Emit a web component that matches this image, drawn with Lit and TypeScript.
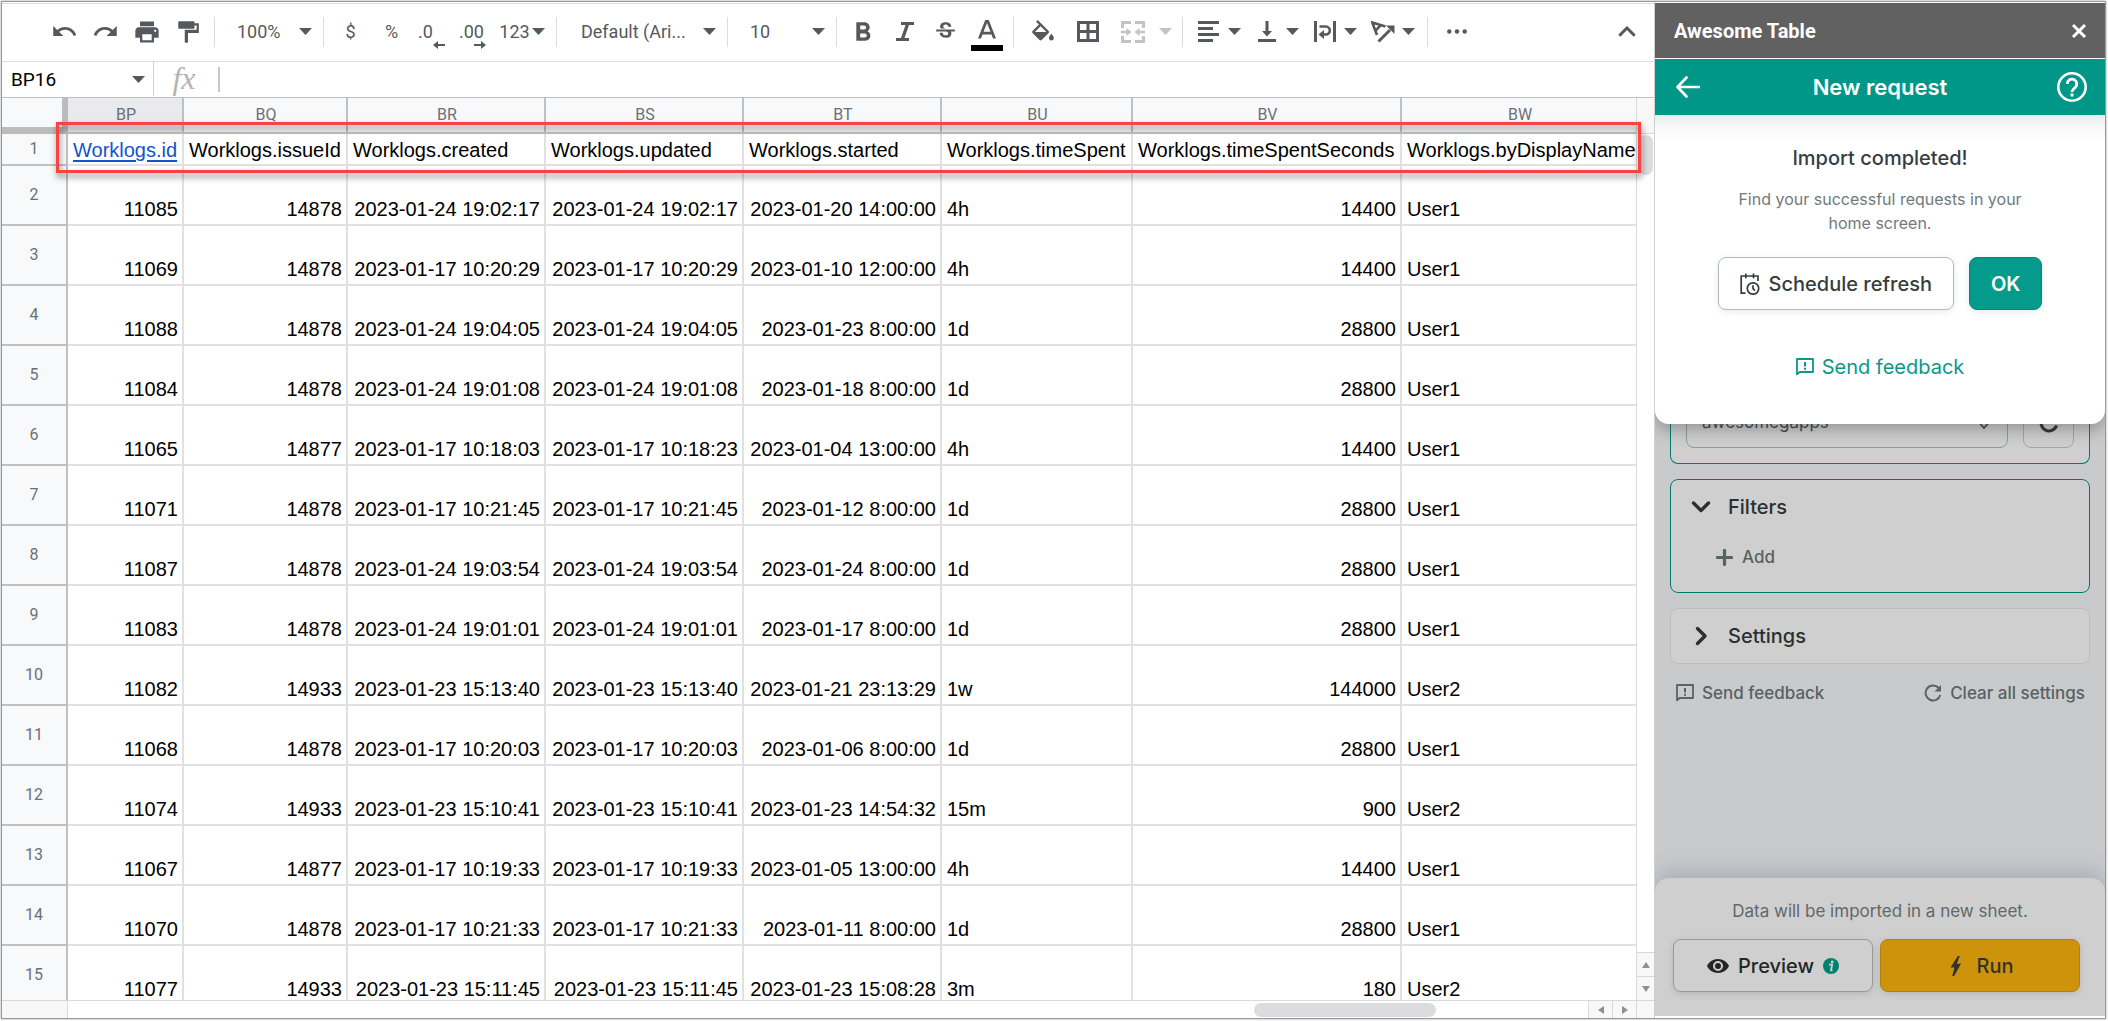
import { LitElement, html, css, svg, nothing, type TemplateResult } from "lit";
import { customElement, property } from "lit/decorators.js";
import { classMap } from "lit/directives/class-map.js";

type Glyph = { box: string; w: number; h: number; art: TemplateResult };

const glyphs: Record<string, Glyph> = {
  caret: { box: "0 0 13 7", w: 13, h: 7, art: svg`<path d="M0 0h13l-6.500 7z"/>` },
  undo: { box: "0 0 24 24", w: 29, h: 27, art: svg`<path d="M12.500 8c-2.650 0-5.050.990-6.900 2.600L2 7v9h9l-3.620-3.620c1.390-1.160 3.160-1.880 5.120-1.880 3.540 0 6.550 2.310 7.600 5.500l2.370-.780C21.080 11.030 17.150 8 12.500 8z"/>` },
  redo: { box: "0 0 24 24", w: 29, h: 27, art: svg`<path d="M18.400 10.600C16.550 8.990 14.150 8 11.500 8c-4.650 0-8.580 3.030-9.960 7.220L3.900 16c1.050-3.190 4.050-5.500 7.600-5.500 1.950 0 3.730.720 5.120 1.880L13 16h9V7l-3.600 3.600z"/>` },
  print: { box: "0 0 24 24", w: 28, h: 28, art: svg`<path d="M19 8H5c-1.660 0-3 1.340-3 3v6h4v4h12v-4h4v-6c0-1.660-1.340-3-3-3zm-3 11H8v-5h8v5zm3-7c-.550 0-1-.450-1-1s.450-1 1-1 1 .450 1 1-.450 1-1 1zm-1-9H6v4h12V3z"/>` },
  paint: { box: "0 0 24 24", w: 26, h: 26, art: svg`<path d="M18 4V3c0-.550-.450-1-1-1H4c-.550 0-1 .450-1 1v5c0 .550.450 1 1 1h13c.550 0 1-.450 1-1V6h2v4H9v11c0 .550.450 1 1 1h1c.550 0 1-.450 1-1v-8h10V4h-4z"/>` },
  decLeft: { box: "0 0 12 8", w: 12, h: 8, art: svg`<path d="M0 4l5-4v3h7v2H5v3z"/>` },
  decRight: { box: "0 0 12 8", w: 12, h: 8, art: svg`<path d="M12 4L7 0v3H0v2h7v3z"/>` },
  bold: { box: "6 3 13 16", w: 17, h: 21, art: svg`<path d="M15.600 10.790c.970-.670 1.650-1.770 1.650-2.790 0-2.260-1.750-4-4-4H7v14h7.040c2.090 0 3.710-1.700 3.710-3.790 0-1.520-.860-2.820-2.150-3.420zM10 6.500h3c.830 0 1.500.670 1.500 1.500s-.670 1.500-1.500 1.500h-3v-3zm3.500 9H10v-3h3.500c.830 0 1.500.670 1.500 1.500s-.670 1.500-1.500 1.500z"/>` },
  italic: { box: "0 0 18 19", w: 18, h: 19, art: svg`<path d="M5 0h13v3h-5L8.500 16H13v3H0v-3h5L9.500 3H5z"/>` },
  strike: { box: "0 0 24 24", w: 27, h: 25, art: svg`<path d="M7.240 8.750c-.260-.480-.390-1.030-.390-1.670 0-.610.130-1.160.400-1.670.260-.500.630-.930 1.110-1.290.480-.350 1.050-.630 1.700-.830.660-.190 1.390-.290 2.180-.290.810 0 1.540.110 2.210.340.660.220 1.230.540 1.690.940.470.400.830.880 1.080 1.430.250.550.380 1.150.380 1.810h-3.010c0-.310-.050-.590-.150-.850-.090-.270-.240-.490-.440-.680-.200-.190-.450-.330-.750-.440-.300-.100-.660-.160-1.060-.160-.390 0-.740.040-1.030.130-.290.090-.530.210-.720.360-.190.160-.340.340-.440.550-.100.210-.150.430-.150.660 0 .480.250.880.740 1.210.380.250.770.480 1.410.700H7.390c-.050-.080-.110-.170-.150-.250zM21 12v-2H3v2h9.620c.180.070.400.140.550.200.370.170.660.340.870.510.210.170.350.360.430.570.070.200.110.430.110.690 0 .230-.050.450-.140.660-.090.200-.230.380-.420.530-.190.150-.420.260-.710.350-.290.080-.630.130-1.010.130-.430 0-.830-.040-1.180-.130s-.660-.230-.910-.420c-.250-.190-.450-.440-.590-.750-.140-.310-.250-.760-.250-1.210H6.400c0 .550.080 1.130.240 1.580.160.450.370.850.650 1.210.280.350.600.660.980.920.370.260.780.480 1.220.650.440.170.900.300 1.380.390.480.080.960.130 1.440.130.800 0 1.530-.090 2.180-.280s1.210-.450 1.670-.790c.460-.340.820-.770 1.070-1.270s.380-1.070.380-1.710c0-.600-.100-1.140-.310-1.610-.050-.110-.110-.230-.170-.330H21z"/>` },
  textColor: { box: "0 0 32 38", w: 32, h: 38, art: svg`<path d="M14.200 7L7 25.500h3l1.500-4h9l1.500 4h3L17.800 7zM12.600 18.800L16 10.100l3.400 8.700z"/><path fill="#000" d="M0 32h32v6H0z"/>` },
  fill: { box: "2 0 20 20", w: 24, h: 24, art: svg`<path d="M16.560 8.940L7.620 0 6.210 1.410l2.380 2.380-5.150 5.150c-.590.590-.590 1.540 0 2.120l5.500 5.500c.290.290.680.440 1.060.440s.770-.150 1.060-.440l5.500-5.500c.590-.580.590-1.530 0-2.120zM5.210 10L10 5.210 14.790 10H5.210zM19 11.500s-2 2.170-2 3.500c0 1.100.900 2 2 2s2-.900 2-2c0-1.330-2-3.500-2-3.500z"/>` },
  borders: { box: "0 0 22 22", w: 22, h: 22, art: svg`<path d="M0 0v21h22V0zm9.500 18H3v-6h6.500zm0-9H3V3h6.500zm9.500 9h-6.500v-6H19zm0-9h-6.500V3H19z"/>` },
  merge: { box: "0 0 24 22", w: 24, h: 22, art: svg`<path d="M0 0h10v3H3v4H0zM14 0h10v7h-3V3h-7zM0 15h3v4h7v3H0zM21 15h3v7H14v-3h7zM0 9.800h5.500V7l5 4-5 4v-2.800H0zM24 9.800h-5.500V7l-5 4 5 4v-2.800H24z"/>` },
  alignLeft: { box: "0 0 21 21", w: 21, h: 21, art: svg`<path d="M0 0h21v3H0zM0 6h15v3H0zM0 12h21v3H0zM0 18h15v3H0z"/>` },
  alignBottom: { box: "0 0 18 21", w: 18, h: 21, art: svg`<path d="M7.500 0h3v10H14l-5 5.500L4 10h3.500zM0 18h18v3H0z"/>` },
  wrap: { box: "0 0 22 21", w: 22, h: 21, art: svg`<path d="M0 0h3v21H0zM19 0h3v21h-3z"/><path d="M5.500 5.500h6.300a4 4 0 0 1 0 8H9" fill="none" stroke="currentColor" stroke-width="2.600"/><path d="M4.500 13.500L10 9v9z"/>` },
  rotate: { box: "0 0 24 22", w: 24, h: 22, art: svg`<path d="M6 14L1.300 1.500 14.500 5.500M9.800 4.200L4.600 9.700" fill="none" stroke="currentColor" stroke-width="2.600"/><path d="M7.500 20.500L19 9" fill="none" stroke="currentColor" stroke-width="3"/><path d="M15 4.500h8.500V13z"/>` },
  more: { box: "0 0 20 5", w: 20, h: 5, art: svg`<circle cx="2.300" cy="2.500" r="2.200"/><circle cx="10" cy="2.500" r="2.200"/><circle cx="17.700" cy="2.500" r="2.200"/>` },
  collapse: { box: "0 0 18 11", w: 18, h: 11, art: svg`<path d="M1.300 9.700L9 2l7.700 7.700" fill="none" stroke="currentColor" stroke-width="3"/>` },
  up: { box: "0 0 8 6", w: 8, h: 6, art: svg`<path d="M0 6l4-6 4 6z"/>` },
  down: { box: "0 0 8 6", w: 8, h: 6, art: svg`<path d="M0 0l4 6 4-6z"/>` },
  left: { box: "0 0 6 8", w: 6, h: 8, art: svg`<path d="M6 0L0 4l6 4z"/>` },
  right: { box: "0 0 6 8", w: 6, h: 8, art: svg`<path d="M0 0l6 4-6 4z"/>` },
  close: { box: "0 0 16 16", w: 16, h: 16, art: svg`<path d="M2 2l12 12M14 2L2 14" fill="none" stroke="currentColor" stroke-width="3"/>` },
  back: { box: "0 0 24 22", w: 24, h: 22, art: svg`<path d="M23 11H2M10.500 1.500L1.500 11l9 9.500" fill="none" stroke="currentColor" stroke-width="2.600" stroke-linecap="round" stroke-linejoin="round"/>` },
  help: { box: "0 0 30 30", w: 30, h: 30, art: svg`<circle cx="15" cy="15" r="13.700" fill="none" stroke="currentColor" stroke-width="2.600"/><path d="M10.200 12a4.800 4.800 0 1 1 7.900 3.600c-1.700 1.300-3.100 2.200-3.100 4.400" fill="none" stroke="currentColor" stroke-width="2.800"/><path d="M13.500 21.500h3v3h-3z"/>` },
  schedule: { box: "0 0 20 22", w: 20, h: 22, art: svg`<g fill="none" stroke="currentColor" stroke-width="1.700"><path d="M5.500 20.200H1.200V3H18v5M5.800.500v4.800M13.500.500v4.800"/><circle cx="13" cy="15.500" r="5.700"/><path d="M13 12.300v3.400l2 1.900"/></g>` },
  feedback: { box: "0 0 18 18", w: 18, h: 18, art: svg`<path d="M1 16.300V1h16v13H3.600z" fill="none" stroke="currentColor" stroke-width="1.800" stroke-linejoin="round"/><path d="M8 4h2v4.500H8zM8 9.700h2v2H8z"/>` },
  chevronDown: { box: "0 0 24 24", w: 24, h: 24, art: svg`<path d="M4.500 8l7.500 7.500L19.500 8" fill="none" stroke="currentColor" stroke-width="3.400" stroke-linecap="round" stroke-linejoin="round"/>` },
  chevronRight: { box: "0 0 24 24", w: 24, h: 24, art: svg`<path d="M8.500 4.500L16 12l-7.500 7.500" fill="none" stroke="currentColor" stroke-width="3.400" stroke-linecap="round" stroke-linejoin="round"/>` },
  chevronSmall: { box: "0 0 10 14", w: 10, h: 14, art: svg`<path d="M1 8.500l4 4.500 4-4.500M1 5.500L5 1l4 4.500" fill="none" stroke="currentColor" stroke-width="1.800"/>` },
  plus: { box: "0 0 17 17", w: 17, h: 17, art: svg`<path d="M8.500 1.500v14M1.500 8.500h14" fill="none" stroke="currentColor" stroke-width="3.200" stroke-linecap="round"/>` },
  reload: { box: "0 0 18 18", w: 18, h: 18, art: svg`<path d="M16.300 11A7.500 7.500 0 1 1 14.500 3.800" fill="none" stroke="currentColor" stroke-width="2"/><path d="M17 1v6.500h-6.500z"/>` },
  reloadBold: { box: "0 0 20 20", w: 20, h: 20, art: svg`<path d="M17.600 12.500A8 8 0 1 1 16 4.500" fill="none" stroke="currentColor" stroke-width="3"/><path d="M19 1v7h-7z"/>` },
  eye: { box: "0 0 22 14", w: 22, h: 14, art: svg`<path fill-rule="evenodd" d="M11 0C6 0 1.800 2.900 0 7c1.800 4.100 6 7 11 7s9.200-2.900 11-7c-1.800-4.100-6-7-11-7zm0 12a5 5 0 1 1 0-10 5 5 0 0 1 0 10zm0-8a3 3 0 1 0 0 6 3 3 0 0 0 0-6z"/>` },
  bolt: { box: "-4 0 15 20", w: 15, h: 20, art: svg`<path d="M7.800 0L.500 11.500h4L2.200 20l2 0L11 7.800H6.800L9.800 0z"/>` },
  info: { box: "0 0 16 16", w: 16, h: 16, art: svg`<circle cx="8" cy="8" r="8"/><circle cx="9.200" cy="4" r="1.400" fill="#cfcfcf"/><path d="M6 6.700h3.200L8 12.300h1.500" fill="none" stroke="#cfcfcf" stroke-width="1.800"/>` },
};

const icon = (name: string) => {
  const g = glyphs[name];
  return html`<svg class="icon" viewBox=${g.box} width=${g.w} height=${g.h} fill="currentColor" aria-hidden="true">${g.art}</svg>`;
};

const shared = css`
  :host, * { box-sizing: border-box; }
  .icon { display: block; flex: none; }
  button, select, input {
    font: inherit;
    color: inherit;
    background: none;
    border: 0;
    margin: 0;
    padding: 0;
    border-radius: 0;
    outline: 0;
    appearance: none;
  }
  button { display: flex; align-items: center; justify-content: center; cursor: pointer; }
  a { color: inherit; text-decoration: none; }
`;

@customElement("sheet-toolbar")
class SheetToolbar extends LitElement {
  static styles = [shared, css`
    :host { display: block; }
    .toolbar {
      display: flex;
      align-items: center;
      height: 58px;
      padding: 0 7px 2px 42px;
      border-bottom: 1px solid #dadce0;
      font: 400 18px/24px Roboto, "Liberation Sans", sans-serif;
      color: #55595e;
      overflow: hidden;
    }
    .rule { flex: none; width: 1px; height: 30px; margin: 0 6px; background: #dadce0; }
    .tool { flex: none; width: 41px; height: 38px; position: relative; }
    .tool.wide { width: 45px; }
    .tool.decimal { justify-content: flex-start; padding-left: 6px; }
    .tool .arrow { position: absolute; right: 8px; bottom: 2px; }
    .tool.faded { color: #c1c3c6; }
    .tool.faded.wide + .tool.faded { width: 21px; }
    .tool.combo { width: 58px; padding-right: 6px; }
    .combo .face { flex: 1; display: flex; justify-content: center; }
    .tool.number { width: 56px; gap: 2px; }
    .pick { flex: none; display: grid; align-items: center; width: 96px; }
    .pick.font { width: 158px; }
    .pick select, .pick .icon { grid-area: 1 / 1; }
    .pick select { height: 36px; padding-left: 16px; }
    .pick.font select { padding-left: 18px; }
    .pick .icon { justify-self: end; margin-right: 5px; pointer-events: none; }
    .last { margin-left: auto; }
  `];

  private tool(name: string, label: string, cls = "") {
    return html`<button class="tool ${cls}" aria-label=${label}>${icon(name)}</button>`;
  }
  private combo(name: string, label: string) {
    return html`<button class="tool combo" aria-label=${label}><span class="face">${icon(name)}</span>${icon("caret")}</button>`;
  }
  private pick(label: string, value: string, cls = "") {
    return html`<div class="pick ${cls}"><select aria-label=${label}><option>${value}</option></select>${icon("caret")}</div>`;
  }

  render() {
    const rule = html`<span class="rule"></span>`;
    return html`<div class="toolbar" role="toolbar">
      ${this.tool("undo", "Undo")}${this.tool("redo", "Redo")}${this.tool("print", "Print")}${this.tool("paint", "Paint format")}
      ${rule}${this.pick("Zoom", "100%")}${rule}
      <button class="tool">$</button><button class="tool">%</button>
      <button class="tool decimal">.0<span class="arrow">${icon("decLeft")}</span></button>
      <button class="tool decimal">.00<span class="arrow">${icon("decRight")}</span></button>
      <button class="tool number">123${icon("caret")}</button>
      ${rule}${this.pick("Font", "Default (Ari...", "font")}${rule}${this.pick("Font size", "10")}${rule}
      ${this.tool("bold", "Bold")}${this.tool("italic", "Italic")}${this.tool("strike", "Strikethrough")}${this.tool("textColor", "Text color")}
      ${rule}${this.tool("fill", "Fill color", "wide")}${this.tool("borders", "Borders", "wide")}${this.tool("merge", "Merge cells", "wide faded")}${this.tool("caret", "Merge type", "faded")}
      ${rule}${this.combo("alignLeft", "Horizontal align")}${this.combo("alignBottom", "Vertical align")}${this.combo("wrap", "Text wrapping")}${this.combo("rotate", "Text rotation")}
      ${rule}${this.tool("more", "More", "wide")}${this.tool("collapse", "Hide the menus", "last")}
    </div>`;
  }
}

type Cell = string;
const columns = [
  { id: "BP", width: 116, title: "Worklogs.id", numeric: true },
  { id: "BQ", width: 164, title: "Worklogs.issueId", numeric: true },
  { id: "BR", width: 198, title: "Worklogs.created", numeric: true },
  { id: "BS", width: 198, title: "Worklogs.updated", numeric: true },
  { id: "BT", width: 198, title: "Worklogs.started", numeric: true },
  { id: "BU", width: 191, title: "Worklogs.timeSpent", numeric: false },
  { id: "BV", width: 269, title: "Worklogs.timeSpentSeconds", numeric: true },
  { id: "BW", width: 0, title: "Worklogs.byDisplayName", numeric: false },
];
const rows: Cell[][] = [
  ["11085", "14878", "2023-01-24 19:02:17", "2023-01-24 19:02:17", "2023-01-20 14:00:00", "4h", "14400", "User1"],
  ["11069", "14878", "2023-01-17 10:20:29", "2023-01-17 10:20:29", "2023-01-10 12:00:00", "4h", "14400", "User1"],
  ["11088", "14878", "2023-01-24 19:04:05", "2023-01-24 19:04:05", "2023-01-23 8:00:00", "1d", "28800", "User1"],
  ["11084", "14878", "2023-01-24 19:01:08", "2023-01-24 19:01:08", "2023-01-18 8:00:00", "1d", "28800", "User1"],
  ["11065", "14877", "2023-01-17 10:18:03", "2023-01-17 10:18:23", "2023-01-04 13:00:00", "4h", "14400", "User1"],
  ["11071", "14878", "2023-01-17 10:21:45", "2023-01-17 10:21:45", "2023-01-12 8:00:00", "1d", "28800", "User1"],
  ["11087", "14878", "2023-01-24 19:03:54", "2023-01-24 19:03:54", "2023-01-24 8:00:00", "1d", "28800", "User1"],
  ["11083", "14878", "2023-01-24 19:01:01", "2023-01-24 19:01:01", "2023-01-17 8:00:00", "1d", "28800", "User1"],
  ["11082", "14933", "2023-01-23 15:13:40", "2023-01-23 15:13:40", "2023-01-21 23:13:29", "1w", "144000", "User2"],
  ["11068", "14878", "2023-01-17 10:20:03", "2023-01-17 10:20:03", "2023-01-06 8:00:00", "1d", "28800", "User1"],
  ["11074", "14933", "2023-01-23 15:10:41", "2023-01-23 15:10:41", "2023-01-23 14:54:32", "15m", "900", "User2"],
  ["11067", "14877", "2023-01-17 10:19:33", "2023-01-17 10:19:33", "2023-01-05 13:00:00", "4h", "14400", "User1"],
  ["11070", "14878", "2023-01-17 10:21:33", "2023-01-17 10:21:33", "2023-01-11 8:00:00", "1d", "28800", "User1"],
  ["11077", "14933", "2023-01-23 15:11:45", "2023-01-23 15:11:45", "2023-01-23 15:08:28", "3m", "180", "User2"],
];

@customElement("sheet-grid")
class SheetGrid extends LitElement {
  static styles = [shared, css`
    :host { display: flex; flex-direction: column; min-height: 0; }
    .body { flex: 1; min-height: 0; display: flex; position: relative; }
    .view { flex: 1; min-width: 0; overflow: hidden; }
    table { width: 100%; table-layout: fixed; border-collapse: separate; border-spacing: 0; }
    th, td { padding: 0; overflow: hidden; white-space: nowrap; }
    th {
      font: 400 16px/20px Roboto, "Liberation Sans", sans-serif;
      color: #6b7075;
      background: #f8f9fa;
      border-right: 2px solid #c0c0c0;
      border-bottom: 2px solid #c0c0c0;
      text-align: center;
    }
    .heads th { height: 36px; padding-left: 2px; }
    .heads th.picked { background: #e8eaed; }
    .heads th.corner { border-width: 0 6px 7px 0; border-color: #bcbcbc; }
    .heads th:last-child, td:last-child { border-right: 0; }
    td {
      height: 60px;
      padding: 0 4px 3px 5px;
      vertical-align: bottom;
      font: 400 20px/24px "Liberation Sans", Arial, sans-serif;
      color: #000;
      border-right: 2px solid #e1e1e1;
      border-bottom: 2px solid #e1e1e1;
    }
    .titles td { height: 32px; padding-right: 0; padding-bottom: 2px; }
    .numeric { text-align: right; }
    .cell-link { color: #1155cc; text-decoration: underline 2px; text-underline-offset: 3px; }
    .frame {
      position: absolute;
      left: 54px;
      right: 13px;
      top: 24px;
      height: 51px;
      border: 3px solid #ff4141;
      filter: drop-shadow(1px 4px 3px rgba(0, 0, 0, 0.5));
      pointer-events: none;
    }
    .vbar { flex: none; width: 18px; display: flex; flex-direction: column; border-left: 1px solid #d9d9d9; color: #8f8f8f; }
    .vbar .top { height: 36px; background: #f8f8f8; border-bottom: 1px solid #d9d9d9; }
    .vbar .track { flex: 1; padding: 1px 1px 0 2px; }
    .vbar .thumb { height: 40px; border-radius: 8px; background: #dadce0; }
    .vbar button { height: 24px; background: #f8f8f8; border-top: 1px solid #d9d9d9; }
    .hbar { flex: none; display: flex; height: 18px; border-top: 1px solid #d9d9d9; color: #8f8f8f; }
    .hbar .lead { width: 66px; background: #f8f8f8; border-right: 1px solid #d9d9d9; }
    .hbar .track { flex: 1; display: flex; padding: 2px 0 1px; }
    .hbar .before { flex: 78; }
    .hbar .thumb { flex: 12; border-radius: 7px; background: #dadce0; }
    .hbar .after { flex: 10; }
    .hbar button, .hbar .end { width: 24px; background: #f8f8f8; border-left: 1px solid #d9d9d9; }
    .hbar .end { width: 18px; }
  `];

  render() {
    return html`
      <div class="body">
        <div class="view">
          <table>
            <colgroup>
              <col style="width:66px" />
              ${columns.map((c) => html`<col style=${c.width ? `width:${c.width}px` : ""} />`)}
            </colgroup>
            <thead>
              <tr class="heads">
                <th class="corner"></th>
                ${columns.map((c) => html`<th scope="col" class=${classMap({ picked: c.id === "BP" })}>${c.id}</th>`)}
              </tr>
            </thead>
            <tbody>
              <tr class="titles">
                <th scope="row">1</th>
                ${columns.map((c, i) => html`<td>${i === 0 ? html`<a class="cell-link" href="#worklogs">${c.title}</a>` : c.title}</td>`)}
              </tr>
              ${rows.map((r, n) => html`<tr>
                <th scope="row">${n + 2}</th>
                ${r.map((v, i) => html`<td class=${columns[i].numeric ? "numeric" : nothing}>${v}</td>`)}
              </tr>`)}
            </tbody>
          </table>
        </div>
        <div class="vbar">
          <div class="top"></div>
          <div class="track"><div class="thumb"></div></div>
          <button aria-label="Scroll up">${icon("up")}</button>
          <button aria-label="Scroll down">${icon("down")}</button>
        </div>
        <div class="frame"></div>
      </div>
      <div class="hbar">
        <div class="lead"></div>
        <div class="track"><div class="before"></div><div class="thumb"></div><div class="after"></div></div>
        <button aria-label="Scroll left">${icon("left")}</button>
        <button aria-label="Scroll right">${icon("right")}</button>
        <div class="end"></div>
      </div>`;
  }
}

@customElement("addon-panel")
class AddonPanel extends LitElement {
  @property() heading = "New request";

  static styles = [shared, css`
    :host {
      display: flex;
      flex-direction: column;
      padding: 1px 0 2px;
      background: #fff;
      font: 400 17px/24px Inter, "Liberation Sans", sans-serif;
    }
    .titlebar {
      flex: none;
      display: flex;
      align-items: center;
      justify-content: space-between;
      height: 55px;
      padding: 0 18px 0 19px;
      background: #616161;
      color: #fff;
      font: 700 20px/24px Roboto, "Liberation Sans", sans-serif;
    }
    .titlebar h1 { margin: 0; font: inherit; }
    .navbar {
      flex: none;
      display: grid;
      grid-template-columns: 30px 1fr 30px;
      align-items: center;
      height: 56px;
      margin-top: 1px;
      padding: 0 18px;
      background: #009688;
      color: #fff;
    }
    .navbar h2 { margin: 0; font-size: 22px; font-weight: 600; text-align: center; }
    .stage { flex: 1; min-height: 0; position: relative; display: flex; flex-direction: column; background: #c9cacc; overflow: hidden; }
    .form { flex: 1; min-height: 0; padding: 0 15px; display: flex; flex-direction: column; gap: 15px; }
    .card { flex: none; border: 1px solid #bbbdbf; border-radius: 8px; background: #cfcfcf; color: #2b2f30; }
    .card.active { border-color: #007a6d; }
    .source {
      height: 349px;
      border-top: 0;
      border-radius: 0 0 8px 8px;
      display: flex;
      align-items: flex-end;
      gap: 15px;
      padding: 15px;
    }
    .pick { flex: 1; display: grid; align-items: center; color: #3d4243; }
    .pick select, .pick .icon { grid-area: 1 / 1; }
    .pick select { height: 52px; padding: 0 15px; border: 1px solid #949898; border-radius: 8px; }
    .pick .icon { justify-self: end; margin-right: 19px; pointer-events: none; }
    .refresh { width: 51px; height: 51px; border: 1px solid #a3a6a6; border-radius: 8px; }
    .toggle { justify-content: flex-start; width: 100%; height: 54px; padding-left: 18px; gap: 15px; font-size: 20px; font-weight: 500; }
    .add { height: 46px; margin: 0 0 12px 45px; gap: 9px; color: #586263; font-weight: 500; }
    .links { display: flex; justify-content: space-between; padding: 2px 5px 2px 6px; color: #586263; font-weight: 500; }
    .links a, .feedback { display: flex; align-items: center; gap: 8px; }
    .footer {
      flex: none;
      padding: 21px 25px 24px 18px;
      border-radius: 14px 14px 0 0;
      background: #cfcfcf;
      box-shadow: 0 -4px 24px rgba(110, 128, 150, 0.45);
      text-align: center;
      color: #5f686a;
    }
    .footer p { margin: 0 0 16px; padding-left: 7px; }
    .actions { display: flex; gap: 7px; }
    .button { height: 53px; border: 1px solid #b4b8ba; border-radius: 8px; padding: 0 21px; gap: 9px; font-size: 20px; font-weight: 500; }
    .actions .button { flex: 1; border-color: #949999; color: #232626; box-shadow: 0 2px 6px rgba(80, 90, 100, 0.2); }
    .actions .run { background: #cd940b; border-color: #b07f0c; color: #33332c; gap: 15px; }
    .info { display: flex; color: #00806f; }
    .sheet {
      position: absolute;
      inset: 0 0 auto;
      display: flex;
      flex-direction: column;
      align-items: center;
      padding: 31px 24px 45px;
      border-radius: 0 0 14px 14px;
      background: linear-gradient(#e8ebee, #f7f8fa 12px, #fff 28px);
      box-shadow: 0 6px 16px rgba(60, 64, 67, 0.4);
      color: #373c3e;
    }
    .sheet h3 { margin: 0 0 17px; font-size: 20px; font-weight: 500; }
    .sheet p { margin: 0 0 22px; max-width: 320px; font-size: 16px; text-align: center; color: #6f7a7d; }
    .choices { display: flex; gap: 15px; margin-bottom: 45px; }
    .choices .button { background: #fff; box-shadow: 0 2px 6px rgba(60, 80, 100, 0.12); }
    .choices .ok { background: #049b8c; border-color: #058678; color: #fff; font-weight: 600; }
    .feedback { color: #0b9888; font-size: 20px; }
  `];

  render() {
    return html`
      <header class="titlebar"><h1>Awesome Table</h1><button aria-label="Close">${icon("close")}</button></header>
      <nav class="navbar">
        <button aria-label="Back">${icon("back")}</button>
        <h2>${this.heading}</h2>
        <button aria-label="Help">${icon("help")}</button>
      </nav>
      <div class="stage">
        <div class="form">
          <section class="card active source">
            <div class="pick"><select aria-label="Account"><option>awesomegapps</option></select>${icon("chevronSmall")}</div>
            <button class="refresh" aria-label="Refresh accounts">${icon("reloadBold")}</button>
          </section>
          <section class="card active">
            <button class="toggle" aria-expanded="true">${icon("chevronDown")}Filters</button>
            <button class="add">${icon("plus")}Add</button>
          </section>
          <section class="card"><button class="toggle" aria-expanded="false">${icon("chevronRight")}Settings</button></section>
          <div class="links">
            <a href="#feedback">${icon("feedback")}Send feedback</a>
            <a href="#clear">${icon("reload")}Clear all settings</a>
          </div>
        </div>
        <footer class="footer">
          <p>Data will be imported in a new sheet.</p>
          <div class="actions">
            <button class="button">${icon("eye")}Preview<span class="info">${icon("info")}</span></button>
            <button class="button run">${icon("bolt")}Run</button>
          </div>
        </footer>
        <div class="sheet" role="dialog" aria-labelledby="done">
          <h3 id="done">Import completed!</h3>
          <p>Find your successful requests in your home screen.</p>
          <div class="choices">
            <button class="button">${icon("schedule")}Schedule refresh</button>
            <button class="button ok">OK</button>
          </div>
          <a class="feedback" href="#feedback">${icon("feedback")}Send feedback</a>
        </div>
      </div>`;
  }
}

@customElement("app-root")
class AppRoot extends LitElement {
  static styles = [shared, css`
    :host { display: flex; height: 100vh; padding: 1px 2px 2px 1px; background: #fff; overflow: hidden; }
    .window {
      flex: 1;
      min-width: 0;
      display: grid;
      grid-template-columns: minmax(0, 1fr) 451px;
      grid-template-rows: minmax(0, 1fr);
      border: 1px solid #999;
      box-shadow: 0 0 2px #999;
    }
    .sheet { display: flex; flex-direction: column; min-width: 0; min-height: 0; margin-top: 1px; border-top: 1px solid #dcdcdc; }
    sheet-grid { flex: 1; }
    addon-panel { border-left: 1px solid #d0d0d0; min-height: 0; }
    .formula {
      flex: none;
      display: flex;
      align-items: center;
      height: 36px;
      border-bottom: 1px solid #c0c0c0;
      color: #55595e;
    }
    .name { display: flex; align-items: center; width: 152px; height: 34px; padding: 0 8px 0 9px; border-right: 1px solid #d0d0d0; align-self: flex-start; }
    .name input { flex: 1; min-width: 0; height: 34px; font: 400 19px/24px Roboto, "Liberation Sans", sans-serif; color: #000; }
    .fx { width: 64px; padding: 0 4px 4px 0; text-align: center; font: italic 400 32px/28px "Liberation Serif", serif; color: #b4b4b4; }
    .entry { flex: 1; height: 25px; border-left: 2px solid #c6c6c6; }
    .entry input { display: block; width: 100%; height: 25px; padding-left: 8px; font: 400 19px/24px Roboto, "Liberation Sans", sans-serif; }
  `];

  render() {
    return html`<div class="window">
      <main class="sheet">
        <sheet-toolbar></sheet-toolbar>
        <div class="formula">
          <div class="name"><input aria-label="Name box" value="BP16" />${icon("caret")}</div>
          <label class="fx" for="fx">fx</label>
          <div class="entry"><input id="fx" /></div>
        </div>
        <sheet-grid></sheet-grid>
      </main>
      <addon-panel></addon-panel>
    </div>`;
  }
}
